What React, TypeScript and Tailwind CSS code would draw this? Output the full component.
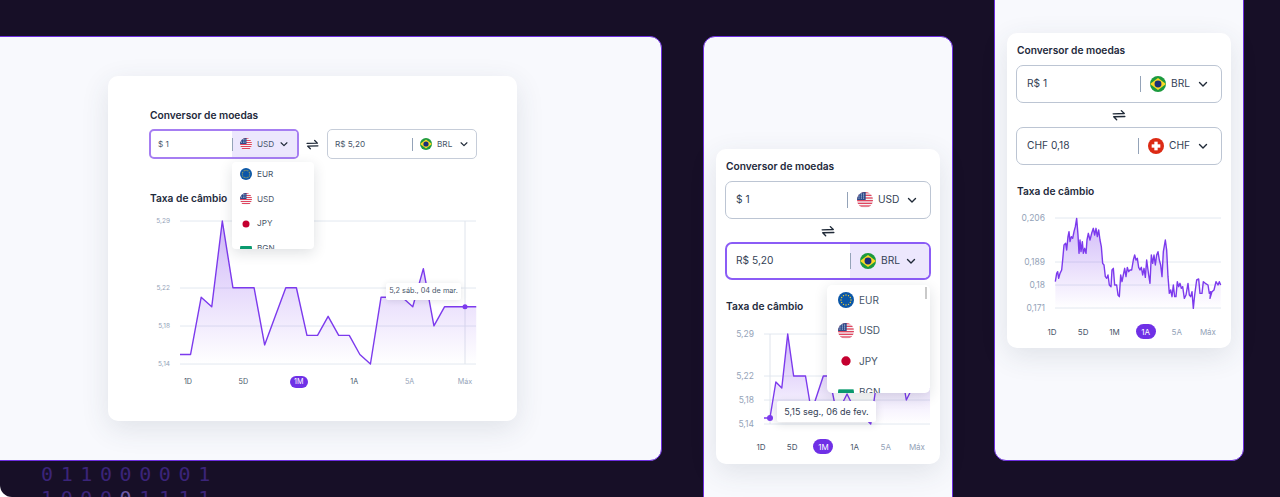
import { ReactNode } from "react";

type Code = "USD" | "BRL" | "EUR" | "JPY" | "BGN" | "CHF";

const rates = [
  5.15, 5.15, 5.21, 5.2, 5.29, 5.22, 5.22, 5.22, 5.16, 5.19, 5.22, 5.22, 5.17, 5.17, 5.19, 5.17, 5.17, 5.15, 5.14,
  5.21, 5.21, 5.21, 5.2, 5.24, 5.18, 5.2, 5.2, 5.2, 5.2,
];

// traced from the 1A chart, values are in 3x px
const chfTrace =
  "166,305 170,280 173,275 176,295 180,280 185,270 188,240 192,195 197,190 200,210 204,170 207,155 210,185 214,170 218,175 222,155 226,140 230,115 234,165 237,220 240,180 243,215 247,185 250,220 254,205 258,220 261,180 265,160 270,180 275,160 280,145 284,165 288,145 292,170 296,150 300,180 304,200 308,250 312,255 316,290 320,295 324,285 328,315 333,320 336,270 340,265 344,315 350,315 354,345 358,350 362,285 366,305 370,285 374,265 378,290 382,262 386,275 390,270 395,270 400,240 404,225 408,240 412,235 416,262 420,270 424,262 428,285 432,265 436,292 440,240 446,285 450,310 454,225 458,250 462,225 466,255 470,225 474,215 478,240 482,255 486,290 490,215 496,180 500,210 504,290 508,340 512,330 516,350 520,315 524,350 528,350 532,305 536,320 540,310 544,325 548,320 553,355 558,345 564,310 568,345 572,350 576,335 580,385 584,345 590,300 596,297 600,340 606,340 610,305 616,310 624,315 628,340 632,335 630,355 636,335 642,330 648,305 654,315 658,305 662,315";

function Flag({ code, size }: { code: Code; size: number }) {
  const id = `clip-${code}-${size}`;
  return (
    <svg width={size} height={size} viewBox="0 0 24 24" className="shrink-0">
      <clipPath id={id}>
        <circle cx="12" cy="12" r="12" />
      </clipPath>
      <g clipPath={`url(#${id})`}>
        {code === "USD" && (
          <>
            <rect width="24" height="24" fill="#f4f4f6" />
            {[0, 4, 8, 12, 16, 20].map((y) => (
              <rect key={y} y={y} width="24" height="2" fill="#e0455f" />
            ))}
            <rect width="13" height="12" fill="#2b4a8b" />
            {[3, 6, 9].map((y) =>
              [3, 6.5, 10].map((x) => <circle key={`${x}-${y}`} cx={x} cy={y} r="0.8" fill="#fff" />),
            )}
          </>
        )}
        {code === "BRL" && (
          <>
            <rect width="24" height="24" fill="#1c9a3e" />
            <polygon points="12,3 24,12 12,21 0,12" fill="#fbd925" />
            <circle cx="12" cy="12" r="5.2" fill="#1a2f78" />
          </>
        )}
        {code === "EUR" && (
          <>
            <rect width="24" height="24" fill="#0b57a8" />
            {[0, 30, 60, 90, 120, 150, 180, 210, 240, 270, 300, 330].map((a) => (
              <circle
                key={a}
                cx={12 + 7.5 * Math.cos((a * Math.PI) / 180)}
                cy={12 + 7.5 * Math.sin((a * Math.PI) / 180)}
                r="1"
                fill="#f8d12e"
              />
            ))}
          </>
        )}
        {code === "JPY" && (
          <>
            <rect width="24" height="24" fill="#fff" />
            <circle cx="12" cy="12" r="7" fill="#c4002f" />
          </>
        )}
        {code === "BGN" && (
          <>
            <rect width="24" height="8" fill="#fff" />
            <rect y="8" width="24" height="8" fill="#0a9a6e" />
            <rect y="16" width="24" height="8" fill="#d62612" />
          </>
        )}
        {code === "CHF" && (
          <>
            <rect width="24" height="24" fill="#dc2a14" />
            <rect x="9.5" y="5.5" width="5" height="13" fill="#fff" />
            <rect x="5.5" y="9.5" width="13" height="5" fill="#fff" />
          </>
        )}
      </g>
    </svg>
  );
}

function Chevron({ size }: { size: number }) {
  return (
    <svg width={size} height={size} viewBox="0 0 24 24" fill="none" stroke="#1f2937" strokeWidth="2.8" strokeLinecap="round" strokeLinejoin="round" className="shrink-0">
      <path d="M5 9l7 7 7-7" />
    </svg>
  );
}

function Swap({ size }: { size: number }) {
  return (
    <svg width={size} height={size} viewBox="0 0 24 24" fill="none" stroke="#1f2937" strokeWidth="2.4" strokeLinecap="round" strokeLinejoin="round" className="shrink-0">
      <path d="M2 10l19-0.5-5-5" />
      <path d="M22 14.500L3 15l5 5" />
    </svg>
  );
}

function SmallField({ value, code, active, dividerAt }: { value: string; code: Code; active?: boolean; dividerAt: number }) {
  return (
    <div
      className={`flex h-[30px] w-[150px] overflow-hidden rounded-[5px] text-[8.2px] text-[#475569] ${
        active ? "border-2 border-[#a67ef2]" : "border border-[#c6cdd9]"
      }`}
    >
      <div className="flex flex-1 items-center pl-[7px]">{value}</div>
      <div className={`flex items-center ${active ? "bg-[#ece7fd]" : ""}`} style={{ width: dividerAt }}>
        <div className="h-[13px] w-px bg-[#94a3b8]" />
        <div className="ml-[7px] mr-[5px]">
          <Flag code={code} size={12} />
        </div>
        <span className="w-[17px]">{code}</span>
        <div className="ml-[5px]">
          <Chevron size={10} />
        </div>
      </div>
    </div>
  );
}

function Field({ value, code, active, right }: { value: string; code: Code; active?: boolean; right: number }) {
  return (
    <div
      className={`-ml-px flex h-[38px] w-[206px] overflow-hidden rounded-[7px] text-[10.2px] text-[#334155] ${
        active ? "border-2 border-[#8b5cf6]" : "border border-[#bcc5d3]"
      }`}
    >
      <div className={`flex flex-1 items-center ${active ? "pl-[9px]" : "pl-[10px]"}`}>{value}</div>
      <div className={`flex items-center ${active ? "bg-[#ece7fd]" : ""}`} style={{ width: right }}>
        <div className="h-[16px] w-px bg-[#94a3b8]" />
        <div className="ml-[9px] mr-[5px]">
          <Flag code={code} size={16} />
        </div>
        <span className="flex-1">{code}</span>
        <div className="mr-[12px]">
          <Chevron size={12} />
        </div>
      </div>
    </div>
  );
}

function Dropdown({ small, scrollbar }: { small?: boolean; scrollbar?: boolean }) {
  const codes: Code[] = ["EUR", "USD", "JPY", "BGN"];
  return (
    <div
      className={`absolute overflow-hidden bg-white shadow-[0_4px_14px_rgba(30,41,59,0.14)] ${
        small ? "left-[124px] top-[86px] h-[87px] w-[82px] rounded-[4px] text-[8.2px]" : "left-[111px] top-[136px] h-[108px] w-[103px] rounded-[5px] text-[10px]"
      } text-[#475569]`}
    >
      <div className={`flex flex-col ${small ? "gap-[12.400px] pl-[8px] pt-[6px]" : "gap-[14.700px] pl-[11px] pt-[7px]"}`}>
        {codes.map((code) => (
          <div key={code} className="flex items-center gap-[5px]">
            <Flag code={code} size={small ? 12 : 16} />
            {code}
          </div>
        ))}
      </div>
      {scrollbar && <div className="absolute right-[3px] top-[2px] h-[12px] w-[2px] bg-[#c9c9c9]" />}
    </div>
  );
}

function Ranges({ active, small }: { active: string; small?: boolean }) {
  const items = ["1D", "5D", "1M", "1A", "5A", "Máx"];
  return (
    <div className={`flex justify-between ${small ? "w-[295px] text-[7.2px]" : "w-[176px] text-[8px]"}`}>
      {items.map((item, i) => (
        <span
          key={item}
          className={`flex items-center justify-center rounded-full ${small ? "h-[12px] w-[18px]" : "h-[15px] w-[20px]"} ${
            item === active ? "bg-[#6f30e6] text-white" : i < 4 ? "text-[#475569]" : "text-[#94a3b8]"
          }`}
        >
          {item}
        </span>
      ))}
    </div>
  );
}

function Chart({
  width,
  height,
  left,
  points,
  ticks,
  fontSize,
  marker,
  id,
}: {
  width: number;
  height: number;
  left: number;
  points: [number, number][];
  ticks: { label: string; y: number }[];
  fontSize: number;
  marker?: [number, number];
  id: string;
}) {
  const line = points.map((p) => p.join(",")).join(" ");
  const first = points[0][0];
  const last = points[points.length - 1][0];
  return (
    <svg width={width} height={height} viewBox={`0 0 ${width} ${height}`} className="block overflow-visible">
      <defs>
        <linearGradient id={id} x1="0" y1="0" x2="0" y2="1">
          <stop offset="0" stopColor="#7c3aed" stopOpacity="0.36" />
          <stop offset="1" stopColor="#7c3aed" stopOpacity="0" />
        </linearGradient>
      </defs>
      {ticks.map((t) => (
        <g key={t.label}>
          <line x1={left} x2={width} y1={t.y} y2={t.y} stroke="#e2e8f0" />
          <text x={left - 10} y={t.y + fontSize * 0.36} textAnchor="end" fontSize={fontSize} fill="#94a3b8">
            {t.label}
          </text>
        </g>
      ))}
      {marker && <line x1={marker[0]} x2={marker[0]} y1={ticks[0].y} y2={ticks[ticks.length - 1].y} stroke="#dfe4ec" />}
      <polygon points={`${first},${ticks[ticks.length - 1].y} ${line} ${last},${ticks[ticks.length - 1].y}`} fill={`url(#${id})`} />
      <polyline points={line} fill="none" stroke="#7c3aed" strokeWidth="1.4" strokeLinejoin="round" />
      {marker && <circle cx={marker[0]} cy={marker[1]} r={width > 250 ? 2.5 : 3} fill="#7c3aed" />}
    </svg>
  );
}

function Card({ className, children }: { className: string; children: ReactNode }) {
  return <div className={`relative bg-white shadow-[0_8px_28px_rgba(51,65,85,0.12)] ${className}`}>{children}</div>;
}

function Title({ children, className }: { children: ReactNode; className: string }) {
  return <div className={`text-[10.2px] font-semibold leading-[14px] text-[#1e293b] ${className}`}>{children}</div>;
}

function rateY(v: number, bottom: number, top: number) {
  return bottom - ((v - 5.14) / 0.15) * (bottom - top);
}

export default function App() {
  // chart boxes are local: left one starts at x=149,y=213, middle at x=726,y=327
  const bigPoints = rates.map((v, i): [number, number] => [31 + i * 10.58, rateY(v, 150, 7)]);
  const midPoints = rates.map((v, i): [number, number] => [38 + i * 5.93, rateY(v, 97, 7)]);
  const chfPoints = chfTrace.split(" ").map((p): [number, number] => {
    const [x, y] = p.split(",").map(Number);
    return [x / 3 + 1000 - 1017, y / 3 + 180 - 209];
  });

  return (
    <div className="flex h-[497px] w-[1280px] overflow-hidden rounded-bl-[12px] bg-[#170f27] font-[Inter,sans-serif]">
      <div className="-ml-4 flex w-[678px] shrink-0 flex-col pt-[36px]">
        <div className="h-[425px] shrink-0 rounded-[12px] border border-[#6d2ee0] bg-[#f8f9fd] pl-[123px] pt-[39px]">
          <Card className="h-[345px] w-[409px] rounded-[10px] pl-[41px] pt-[32px]">
            <Title className="ml-px">Conversor de moedas</Title>
            <div className="mt-[7px] flex items-center">
              <SmallField value="$ 1" code="USD" active dividerAt={65} />
              <div className="ml-[7px] mr-[8px] flex w-[13px] justify-center">
                <Swap size={13} />
              </div>
              <SmallField value="R$ 5,20" code="BRL" dividerAt={64} />
            </div>
            <Title className="ml-px mt-[32px]">Taxa de câmbio</Title>
            <div className="mt-[9px]">
              <Chart
                id="big"
                width={327}
                height={152}
                left={31}
                points={bigPoints}
                fontSize={6.5}
                marker={[316, rateY(5.2, 150, 7)]}
                ticks={[
                  { label: "5,29", y: 7 },
                  { label: "5,22", y: 74 },
                  { label: "5,18", y: 112 },
                  { label: "5,14", y: 150 },
                ]}
              />
            </div>
            <div className="ml-[30px] mt-[10px]">
              <Ranges active="1M" small />
            </div>
            <Dropdown small />
            <div className="absolute left-[278px] top-[207px] flex h-[17px] w-[75px] items-center justify-center whitespace-nowrap rounded-[2px] bg-white text-[7.3px] text-[#475569] shadow-[0_1px_6px_rgba(30,41,59,0.12)]">
              5,2 sáb., 04 de mar.
            </div>
          </Card>
        </div>
        <div className="ml-[57px] mt-px shrink-0 font-['DejaVu_Sans_Mono',monospace] text-[20px] font-normal leading-[24px] tracking-[7.6px] text-[#3b2479]">
          <div>011000001</div>
          <div>
            1000<span className="text-[#6b5aa6]">0</span>1111
          </div>
        </div>
      </div>

      <div className="ml-[41px] mt-[36px] h-[480px] w-[250px] shrink-0 rounded-[12px] border border-[#6d2ee0] bg-[#f8f9fd] pl-[12px] pt-[112px]">
        <Card className="h-[315px] w-[224px] rounded-[10px] pl-[10px] pt-[10px]">
          <Title className="">Conversor de moedas</Title>
          <div className="mt-[8px] flex flex-col items-start">
            <Field value="$ 1" code="USD" right={83} />
            <div className="-ml-px flex h-[23px] w-[206px] items-center justify-center">
              <Swap size={14} />
            </div>
            <Field value="R$ 5,20" code="BRL" active right={79} />
          </div>
          <Title className="mt-[19px]">Taxa de câmbio</Title>
          <div className="mt-[14px]">
            <Chart
              id="mid"
              width={204}
              height={99}
              left={38}
              points={midPoints}
              fontSize={8.5}
              marker={[44, rateY(5.15, 97, 7)]}
              ticks={[
                { label: "5,29", y: 7 },
                { label: "5,22", y: 49 },
                { label: "5,18", y: 73 },
                { label: "5,14", y: 97 },
              ]}
            />
          </div>
          <div className="ml-[25px] mt-[13px]">
            <Ranges active="1M" />
          </div>
          <Dropdown scrollbar />
          <div className="absolute left-[61px] top-[252px] flex h-[21px] w-[99px] items-center justify-center whitespace-nowrap rounded-[2px] bg-white text-[9px] text-[#334155] shadow-[0_2px_8px_rgba(30,41,59,0.14)]">
            5,15 seg., 06 de fev.
          </div>
        </Card>
      </div>

      <div className="-mt-4 ml-[41px] h-[477px] w-[250px] shrink-0 rounded-[12px] border border-[#6d2ee0] bg-[#f8f9fd] pl-[12px] pt-[48px]">
        <Card className="h-[315px] w-[224px] rounded-[10px] pl-[10px] pt-[10px]">
          <Title className="">Conversor de moedas</Title>
          <div className="mt-[8px] flex flex-col items-start">
            <Field value="R$ 1" code="BRL" right={81} />
            <div className="-ml-px flex h-[24px] w-[206px] items-center justify-center">
              <Swap size={14} />
            </div>
            <Field value="CHF 0,18" code="CHF" right={83} />
          </div>
          <Title className="mt-[19px]">Taxa de câmbio</Title>
          <div className="mt-[11px]">
            <Chart
              id="chf"
              width={204}
              height={102}
              left={38}
              points={chfPoints}
              fontSize={8.5}
              ticks={[
                { label: "0,206", y: 9 },
                { label: "0,189", y: 53 },
                { label: "0,18", y: 76 },
                { label: "0,171", y: 99 },
              ]}
            />
          </div>
          <div className="ml-[25px] mt-[13px]">
            <Ranges active="1A" />
          </div>
        </Card>
      </div>
    </div>
  );
}
